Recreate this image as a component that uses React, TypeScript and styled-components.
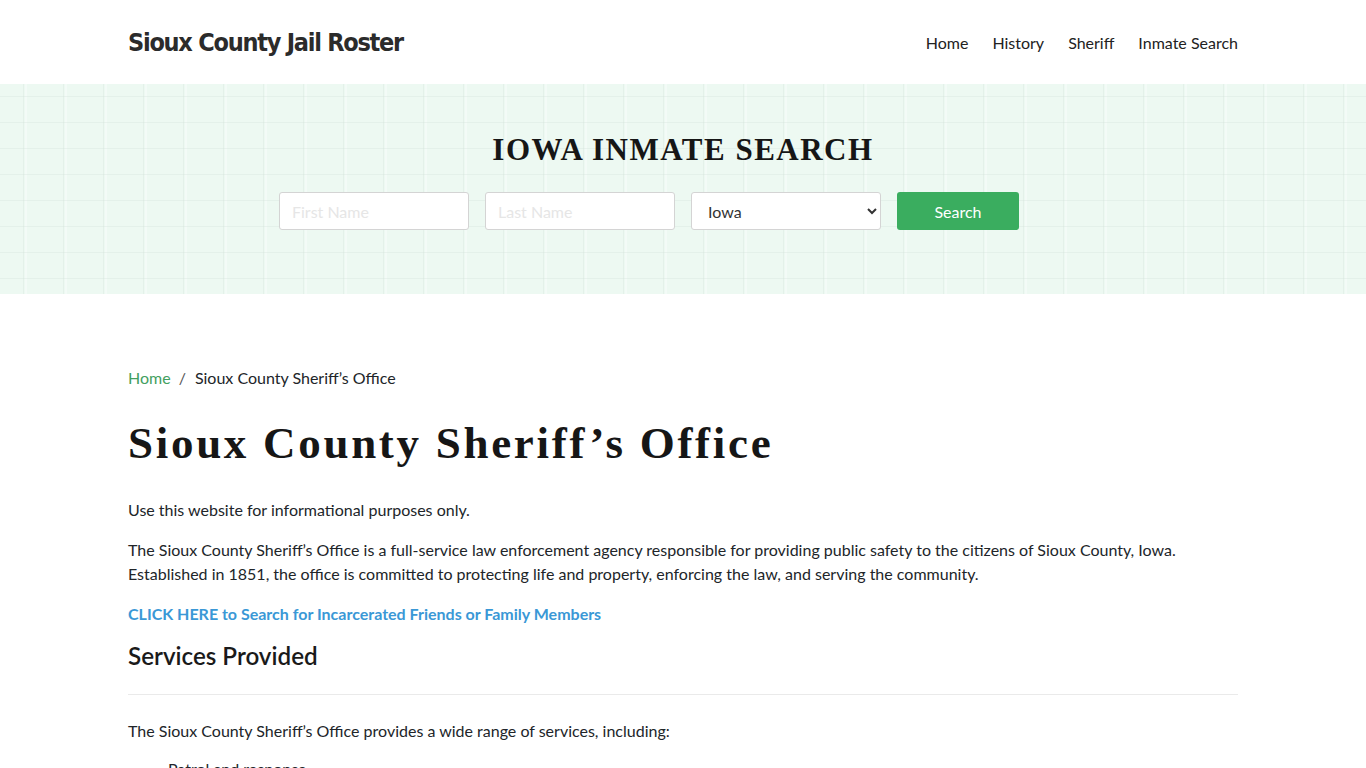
import React from "react";
import styled, { createGlobalStyle } from "styled-components";

const GlobalStyle = createGlobalStyle`
  * { box-sizing: border-box; }
  html, body { margin: 0; padding: 0; background: #fff; }
  body {
    font-family: Lato, "Open Sans", Arial, sans-serif;
    font-size: 16px;
    line-height: 24px;
    color: #212529;
  }
`;

const Container = styled.div`
  width: 1110px;
  margin: 0 auto;
`;

const Header = styled.header`
  height: 84px;
  background: #fff;
`;

const HeaderInner = styled(Container)`
  height: 100%;
  display: flex;
  align-items: center;
  justify-content: space-between;
`;

const Logo = styled.a`
  font-family: "DejaVu Sans Condensed", "DejaVu Sans", sans-serif;
  font-stretch: condensed;
  font-weight: 700;
  font-size: 25px;
  line-height: 30px;
  padding-top: 2px;
  color: #2b2b2b;
  text-decoration: none;
  letter-spacing: -1.25px;
`;

const Nav = styled.nav`
  display: flex;
  gap: 24px;
  padding-top: 2px;
`;

const NavLink = styled.a`
  font-size: 16px;
  color: #222;
  text-decoration: none;
`;

const Banner = styled.section`
  height: 210px;
  background-color: #edf9f2;
  background-image:
    linear-gradient(90deg, rgba(205, 220, 211, 0.28) 1px, transparent 1px),
    linear-gradient(0deg, rgba(205, 220, 211, 0.28) 1px, transparent 1px),
    linear-gradient(90deg, rgba(255, 255, 255, 0.35) 2px, transparent 2px);
  background-size: 40px 26px, 40px 26px, 40px 26px;
  background-position: 23px 13px, 0 13px, 25px 0;
  display: flex;
  flex-direction: column;
  align-items: center;
  padding-top: 48px;
`;

const BannerTitle = styled.h2`
  margin: 0;
  font-family: "Liberation Serif", "Times New Roman", serif;
  font-weight: 700;
  font-size: 31px;
  line-height: 36px;
  letter-spacing: 1.5px;
  color: #161616;
`;

const SearchForm = styled.form`
  margin-top: 24px;
  margin-right: 68px;
  display: flex;
  gap: 16px;
`;

const Field = styled.input`
  width: 190px;
  height: 38px;
  border: 1px solid #d4d4d4;
  border-radius: 3px;
  padding: 0 12px;
  font-family: Lato, sans-serif;
  font-size: 16px;
  background: #fff;
  &::placeholder { color: #e6e6e6; }
`;

const Select = styled.select`
  width: 190px;
  height: 38px;
  border: 1px solid #d4d4d4;
  border-radius: 3px;
  padding: 0 12px;
  font-family: Lato, sans-serif;
  font-size: 16px;
  color: #333;
  background: #fff;
`;

const SearchButton = styled.button`
  width: 122px;
  height: 38px;
  border: none;
  border-radius: 3px;
  background: #3aad5f;
  color: #fff;
  font-family: Lato, sans-serif;
  font-size: 16px;
`;

const Main = styled(Container)`
  padding-top: 72px;
`;

const Breadcrumb = styled.nav`
  display: flex;
  align-items: center;
  font-size: 16px;
  line-height: 24px;
  color: #212529;
`;

const CrumbLink = styled.a`
  color: #43a05f;
  text-decoration: none;
`;

const CrumbSep = styled.span`
  padding: 0 9px 0 8px;
  color: #555;
`;

const Title = styled.h1`
  margin: 26px 0 0;
  font-family: "Liberation Serif", "Times New Roman", serif;
  font-weight: 700;
  font-size: 45px;
  line-height: 54px;
  letter-spacing: 2.7px;
  color: #161616;
`;

const Para = styled.p`
  margin: 28px 0 0;
  font-size: 16px;
  line-height: 24px;
  color: #212529;
  & + & { margin-top: 16px; }
`;

const CtaLink = styled.a`
  display: block;
  margin-top: 16px;
  font-weight: 700;
  color: #3a98d6;
  text-decoration: none;
`;

const SubTitle = styled.h2`
  margin: 14px 0 0;
  font-family: Lato, sans-serif;
  font-weight: 600;
  font-size: 24.2px;
  line-height: 32px;
  color: #1a1a1a;
`;

const Rule = styled.hr`
  margin: 22px 0 0;
  border: 0;
  border-top: 1px solid #eaeaea;
`;

const Lead = styled.p`
  margin: 24px 0 0;
`;

const List = styled.ul`
  margin: 14px 0 0;
  padding-left: 40px;
`;

export default function App() {
  return (
    <>
      <GlobalStyle />
      <Header>
        <HeaderInner>
          <Logo href="#">Sioux County Jail Roster</Logo>
          <Nav>
            <NavLink href="#">Home</NavLink>
            <NavLink href="#">History</NavLink>
            <NavLink href="#">Sheriff</NavLink>
            <NavLink href="#">Inmate Search</NavLink>
          </Nav>
        </HeaderInner>
      </Header>
      <Banner>
        <BannerTitle>IOWA INMATE SEARCH</BannerTitle>
        <SearchForm onSubmit={(e) => e.preventDefault()}>
          <Field placeholder="First Name" />
          <Field placeholder="Last Name" />
          <Select defaultValue="Iowa">
            <option>Iowa</option>
          </Select>
          <SearchButton type="submit">Search</SearchButton>
        </SearchForm>
      </Banner>
      <Main>
        <Breadcrumb>
          <CrumbLink href="#">Home</CrumbLink>
          <CrumbSep>/</CrumbSep>
          <span>Sioux County Sheriff’s Office</span>
        </Breadcrumb>
        <Title>Sioux County Sheriff’s Office</Title>
        <Para>Use this website for informational purposes only.</Para>
        <Para>
          The Sioux County Sheriff’s Office is a full-service law enforcement agency responsible for providing public safety to the citizens of Sioux County, Iowa. Established in 1851, the office is committed to protecting life and property, enforcing the law, and serving the community.
        </Para>
        <CtaLink href="#">CLICK HERE to Search for Incarcerated Friends or Family Members</CtaLink>
        <SubTitle>Services Provided</SubTitle>
        <Rule />
        <Lead>The Sioux County Sheriff’s Office provides a wide range of services, including:</Lead>
        <List>
          <li>Patrol and response</li>
          <li>Jail operations</li>
        </List>
      </Main>
    </>
  );
}
